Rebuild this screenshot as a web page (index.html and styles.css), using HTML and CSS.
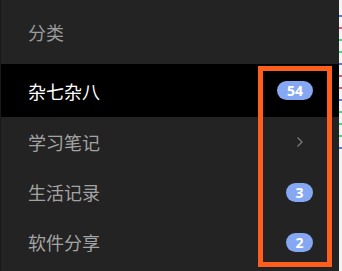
FILE: index.html
```html
<!DOCTYPE html>
<html lang="zh">
<head>
<meta charset="utf-8">
<link rel="stylesheet" href="styles.css">
</head>
<body>
<div class="page">
  <nav class="panel">
    <div class="header">分类</div>
    <div class="row active"><span class="label">杂七杂八</span><span class="badge wide">54</span></div>
    <div class="row"><span class="label">学习笔记</span>
      <svg class="chev" width="8" height="12" viewBox="0 0 8 12"><path d="M1.5 1.5 L6 6 L1.5 10.5" fill="none" stroke="#7a7a7a" stroke-width="1.3"/></svg>
    </div>
    <div class="row"><span class="label">生活记录</span><span class="badge">3</span></div>
    <div class="row"><span class="label">软件分享</span><span class="badge">2</span></div>
  </nav>
  <div class="strip">
    <i class="m blue"></i><i class="m red"></i><i class="m green"></i><i class="m green"></i><i class="m blue"></i><i class="m red"></i><i class="m red"></i><i class="m blue"></i><i class="m green"></i><i class="m green"></i><i class="m green"></i><i class="m blue"></i>
  </div>
  <div class="highlight"></div>
</div>
</body>
</html>
```
FILE: styles.css
```css
html, body {
  margin: 0;
  padding: 0;
  background: #ffffff;
}
.page {
  position: relative;
  width: 342px;
  height: 271px;
  display: flex;
  overflow: hidden;
  font-family: "Noto Sans CJK SC", "Noto Sans", sans-serif;
}
.panel {
  width: 338px;
  height: 271px;
  background: #232323;
  border-left: 1px solid #191919;
  display: flex;
  flex-direction: column;
}
.header {
  height: 64px;
  display: flex;
  align-items: center;
  padding-left: 27px;
  font-size: 18px;
  color: #9b9b9b;
}
.row {
  height: 50px;
  display: flex;
  align-items: center;
  justify-content: space-between;
  padding: 0 26px 0 27px;
  font-size: 18px;
  color: #a3a3a3;
}
.row.active {
  height: 53px;
  background: #000000;
  color: #ffffff;
}
.badge {
  min-width: 27px;
  height: 19px;
  border-radius: 10px;
  background: #86a8f3;
  color: #ffffff;
  font-family: "Open Sans", "DejaVu Sans", sans-serif;
  font-weight: 700;
  font-size: 14px;
  line-height: 19px;
  text-align: center;
  box-sizing: border-box;
}
.badge.wide {
  min-width: 36px;
}
.chev {
  margin-right: 9px;
}
.strip {
  width: 3px;
  display: flex;
  flex-direction: column;
  padding-top: 15px;
  gap: 10px;
  background: #f4f4f4;
}
.m {
  display: block;
  height: 2px;
  width: 3px;
}
.m.blue { background: #5b7cf0; }
.m.red { background: #f0507a; }
.m.green { background: #3ee07a; }
.highlight {
  position: absolute;
  left: 258px;
  top: 66px;
  width: 64px;
  height: 191px;
  border: 5px solid #ff5e1c;
  box-shadow: 0 0 1px rgba(0,0,0,0.4);
}
```
